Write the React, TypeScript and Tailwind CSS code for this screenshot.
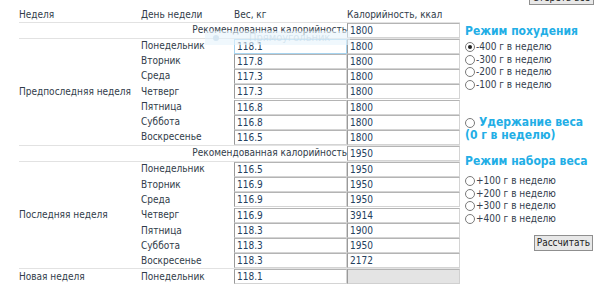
import React from 'react';

type Day = [string, string, string];

const weeks: { name: string; rec: string; days: Day[] }[] = [
  {
    name: 'Предпоследняя неделя',
    rec: '1800',
    days: [
      ['Понедельник', '118.1', '1800'],
      ['Вторник', '117.8', '1800'],
      ['Среда', '117.3', '1800'],
      ['Четверг', '117.3', '1800'],
      ['Пятница', '116.8', '1800'],
      ['Суббота', '116.8', '1800'],
      ['Воскресенье', '116.5', '1800'],
    ],
  },
  {
    name: 'Последняя неделя',
    rec: '1950',
    days: [
      ['Понедельник', '116.5', '1950'],
      ['Вторник', '116.9', '1950'],
      ['Среда', '116.9', '1950'],
      ['Четверг', '116.9', '3914'],
      ['Пятница', '118.3', '1900'],
      ['Суббота', '118.3', '1950'],
      ['Воскресенье', '118.3', '2172'],
    ],
  },
];

function Cell({ value, focused, disabled }: { value: string; focused?: boolean; disabled?: boolean }) {
  const tone = disabled
    ? 'bg-[#e4e4e4] border-[#d0d0d0] border-l-[#9a9a9a] border-t-[#b4b4b4]'
    : focused
      ? 'bg-white border-[#a6d4f0]'
      : 'bg-white border-[#d4d4d4] border-l-[#9a9a9a] border-t-[#b4b4b4]';
  return (
    <input
      readOnly
      defaultValue={value}
      className={`block w-[113px] h-[15px] px-[2px] text-[#24405e] border outline-none ${tone}`}
    />
  );
}

function Radio({ checked }: { checked?: boolean }) {
  return (
    <span className="inline-flex w-[10px] h-[10px] rounded-full border border-[#7a7a7a] bg-white items-center justify-center mr-[1px] shrink-0">
      {checked && <span className="w-[4px] h-[4px] rounded-full bg-[#222]" />}
    </span>
  );
}

function Option({ label, checked }: { label: string; checked?: boolean }) {
  return (
    <div className="flex items-center h-[12.5px]">
      <Radio checked={checked} />
      <span>{label}</span>
    </div>
  );
}

export default function App() {
  return (
    <div
      className="relative flex w-[599px] h-[289px] overflow-hidden bg-white text-[#313c4a]"
      style={{ fontFamily: '"DejaVu Sans Condensed", "DejaVu Sans", sans-serif' }}
    >
      {/* weight table */}
      <table className="ml-[19px] mt-[8px] self-start border-collapse text-[10px] leading-none">
        <colgroup>
          <col className="w-[122px]" />
          <col className="w-[93px]" />
          <col className="w-[113px]" />
          <col className="w-[113px]" />
        </colgroup>
        <thead>
          <tr className="h-[14px] border-b border-[#e2e2e2] text-left">
            <th className="font-normal p-0">Неделя</th>
            <th className="font-normal p-0">День недели</th>
            <th className="font-normal p-0">Вес, кг</th>
            <th className="font-normal p-0">Калорийность, ккал</th>
          </tr>
        </thead>
        <tbody>
          {weeks.map((w) => (
            <React.Fragment key={w.name}>
              <tr className="h-[15px] border-b border-[#e2e2e2]">
                <td colSpan={3} className="p-0 text-right">Рекомендованная калорийность</td>
                <td className="p-0">
                  <Cell value={w.rec} />
                </td>
              </tr>
              {w.days.map((d, i) => (
                <tr key={d[0]} className={`h-[15.3px] ${i === 6 ? 'border-b border-[#e2e2e2]' : ''}`}>
                  {i === 0 && (
                    <td rowSpan={7} className="p-0 align-middle">
                      {w.name}
                    </td>
                  )}
                  <td className="p-0">{d[0]}</td>
                  <td className="p-0">
                    <Cell value={d[1]} focused={w.rec === '1800' && i === 0} />
                  </td>
                  <td className="p-0">
                    <Cell value={d[2]} />
                  </td>
                </tr>
              ))}
            </React.Fragment>
          ))}
          <tr className="h-[15px]">
            <td className="p-0">Новая неделя</td>
            <td className="p-0">Понедельник</td>
            <td className="p-0">
              <Cell value="118.1" />
            </td>
            <td className="p-0">
              <Cell value="" disabled />
            </td>
          </tr>
        </tbody>
      </table>

      {/* mode panel */}
      <div className="flex flex-col flex-1 pl-[5px] pr-[5px] text-[10px] leading-none text-[#34404e]">
        <button className="self-end mt-[-10px] h-[15px] px-[3px] text-[10px] border border-[#8f8f8f] bg-[#e8e8e8] text-[#222]">
          Стереть все
        </button>
        <div className="mt-[20px] text-[12px] font-bold text-[#22aee6] whitespace-nowrap">Режим похудения</div>
        <div className="mt-[4px] flex flex-col">
          <Option label="-400 г в неделю" checked />
          <Option label="-300 г в неделю" />
          <Option label="-200 г в неделю" />
          <Option label="-100 г в неделю" />
        </div>
        <div className="mt-[25px] text-[12px] font-bold text-[#22aee6] leading-[13px] whitespace-nowrap">
          <div className="flex items-center">
            <Radio />
            <span className="ml-[3px]">Удержание веса</span>
          </div>
          <div>(0 г в неделю)</div>
        </div>
        <div className="mt-[13px] text-[12px] font-bold text-[#22aee6] whitespace-nowrap">Режим набора веса</div>
        <div className="mt-[8px] flex flex-col">
          <Option label="+100 г в неделю" />
          <Option label="+200 г в неделю" />
          <Option label="+300 г в неделю" />
          <Option label="+400 г в неделю" />
        </div>
        <button className="self-end mt-[10px] mr-[1px] h-[16px] px-[2px] text-[10px] border border-[#8f8f8f] bg-[#e8e8e8] text-[#222]">
          Рассчитать
        </button>
      </div>

      {/* faint tooltip ghost */}
      <div className="absolute left-[205px] top-[31px] w-[145px] h-[14px] bg-[#e6f3fc]/60 flex items-center pointer-events-none text-[11px] text-[#c9dcea]/70">
        <span className="ml-[8px] w-[6px] h-[6px] rounded-full bg-[#d6e6f2]" />
        <span className="ml-[30px]">Прямоугольник</span>
      </div>
    </div>
  );
}
